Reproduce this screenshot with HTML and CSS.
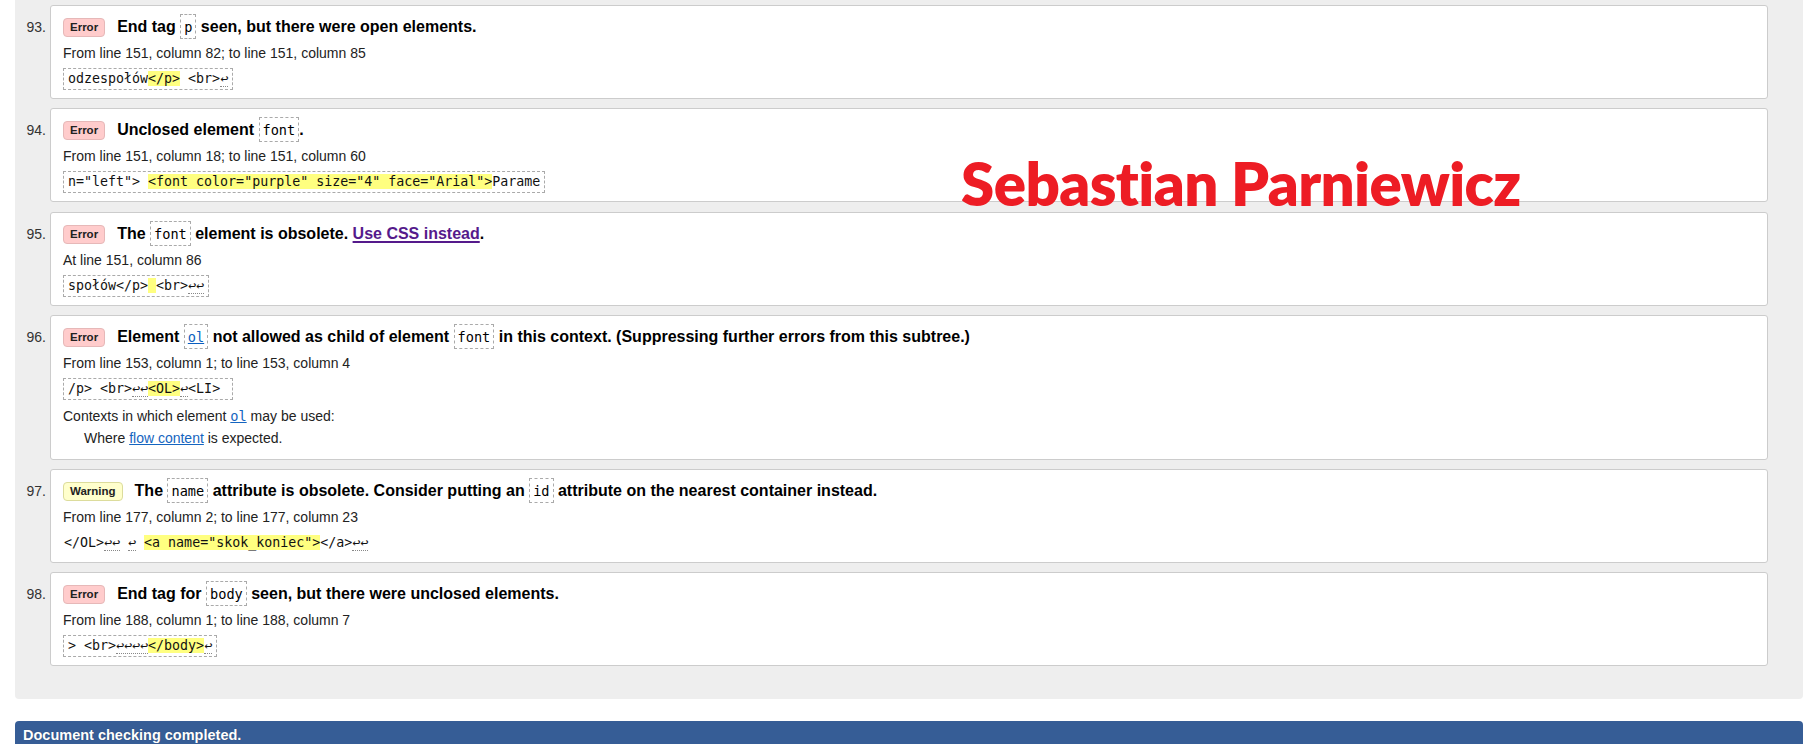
FILE: index.html
```html
<!DOCTYPE html>
<html lang="pl">
<head>
<meta charset="utf-8">
<title>Validation results</title>
<link rel="stylesheet" href="styles.css">
</head>
<body>
<div class="results">
  <ol class="msgs">
    <li class="msg">
      <span class="num">93.</span>
      <div class="card">
        <p class="title"><span class="badge error">Error</span>End tag <code>p</code> seen, but there were open elements.</p>
        <p class="loc">From line 151, column 82; to line 151, column 85</p>
        <p class="ext"><code class="extract">odzespołów<mark>&lt;/p&gt;</mark> &lt;br&gt;<span class="nl">↩</span></code></p>
      </div>
    </li>
    <li class="msg">
      <span class="num">94.</span>
      <div class="card">
        <p class="title"><span class="badge error">Error</span>Unclosed element <code>font</code>.</p>
        <p class="loc">From line 151, column 18; to line 151, column 60</p>
        <p class="ext"><code class="extract">n="left"&gt; <mark>&lt;font color="purple" size="4" face="Arial"&gt;</mark>Parame</code></p>
      </div>
    </li>
    <li class="msg">
      <span class="num">95.</span>
      <div class="card">
        <p class="title"><span class="badge error">Error</span>The <code>font</code> element is obsolete. <a class="visited" href="#">Use CSS instead</a>.</p>
        <p class="loc">At line 151, column 86</p>
        <p class="ext"><code class="extract">społów&lt;/p&gt;<mark> </mark>&lt;br&gt;<span class="nl">↩↩</span></code></p>
      </div>
    </li>
    <li class="msg">
      <span class="num">96.</span>
      <div class="card">
        <p class="title"><span class="badge error">Error</span>Element <code><a class="link" href="#">ol</a></code> not allowed as child of element <code>font</code> in this context. (Suppressing further errors from this subtree.)</p>
        <p class="loc">From line 153, column 1; to line 153, column 4</p>
        <p class="ext"><code class="extract">/p&gt; &lt;br&gt;<span class="nl">↩↩</span><mark>&lt;OL&gt;</mark><span class="nl">↩</span>&lt;LI&gt; </code></p>
        <p class="ctx">Contexts in which element <a class="link mono" href="#">ol</a> may be used:</p>
        <p class="ctx-item">Where <a class="link" href="#">flow content</a> is expected.</p>
      </div>
    </li>
    <li class="msg">
      <span class="num">97.</span>
      <div class="card">
        <p class="title"><span class="badge warning">Warning</span>The <code>name</code> attribute is obsolete. Consider putting an <code>id</code> attribute on the nearest container instead.</p>
        <p class="loc">From line 177, column 2; to line 177, column 23</p>
        <p class="ext"><code class="extract plain">&lt;/OL&gt;<span class="nl">↩↩</span> <span class="nl">↩</span> <mark>&lt;a name="skok_koniec"&gt;</mark>&lt;/a&gt;<span class="nl">↩↩</span></code></p>
      </div>
    </li>
    <li class="msg">
      <span class="num">98.</span>
      <div class="card">
        <p class="title"><span class="badge error">Error</span>End tag for <code>body</code> seen, but there were unclosed elements.</p>
        <p class="loc">From line 188, column 1; to line 188, column 7</p>
        <p class="ext"><code class="extract">&gt; &lt;br&gt;<span class="nl">↩↩↩↩</span><mark>&lt;/body&gt;</mark><span class="nl">↩</span></code></p>
      </div>
    </li>
  </ol>
</div>
<div class="status">Document checking completed.</div>
<div class="signature">Sebastian Parniewicz</div>
</body>
</html>
```
FILE: styles.css
```css
html, body {
  margin: 0;
  padding: 0;
  background: #ffffff;
}
body {
  font-family: "Liberation Sans", Arial, sans-serif;
  color: #000;
  position: relative;
  width: 1806px;
  height: 744px;
  overflow: hidden;
}
p { margin: 0; }

.results {
  margin: 0 3px 0 15px;
  background: #eeeeee;
  border-radius: 0 0 4px 4px;
  padding: 5px 35px 33px 0;
}
.msgs {
  list-style: none;
  margin: 0;
  padding: 0;
  display: flex;
  flex-direction: column;
  gap: 9.4px;
}
.msg {
  display: flex;
  align-items: flex-start;
}
.num {
  flex: 0 0 35px;
  box-sizing: border-box;
  padding: 9px 4px 0 0;
  text-align: right;
  font-size: 14px;
  line-height: 26px;
  color: #333;
}
.card {
  flex: 1;
  background: #fff;
  border: 1px solid #cccccc;
  border-radius: 3px;
  padding: 8px 12px 8px 12px;
}
.title {
  font-size: 16px;
  font-weight: bold;
  line-height: 26px;
  white-space: nowrap;
}
.title code {
  font-family: "DejaVu Sans Mono", "Liberation Mono", monospace;
  font-weight: normal;
  font-size: 13.6px;
  border: 1px dashed #aaaaaa;
  padding: 4px 3px 3px;
}
.badge {
  display: inline-block;
  vertical-align: 1px;
  height: 17px;
  line-height: 17px;
  padding: 0 6px;
  margin-right: 12px;
  border-radius: 4px;
  font-size: 11.5px;
  font-weight: bold;
  color: #222;
}
.badge.error {
  background: #ffcccc;
  border: 1px solid #e6b8b8;
}
.badge.warning {
  background: #ffffcc;
  border: 1px solid #dcdc9c;
}
.loc {
  margin-top: 4px;
  font-size: 14px;
  line-height: 18px;
  color: #222;
}
.ext {
  margin-top: 6px;
  line-height: 22px;
  height: 22px;
}
.extract {
  display: inline-block;
  vertical-align: top;
  font-family: "DejaVu Sans Mono", "Liberation Mono", monospace;
  font-size: 13.3px;
  line-height: 20px;
  border: 1px dashed #aaaaaa;
  padding: 0 4px;
  white-space: pre;
  color: #111;
}
.extract.plain {
  border-color: transparent;
  padding: 0;
}
mark {
  background: #ffff80;
  color: inherit;
}
.nl {
  border-bottom: 1px dotted #888;
}
.visited {
  color: #551a8b;
  text-decoration: underline;
  text-decoration-thickness: 2px;
  text-underline-offset: 2px;
}
.link {
  color: #1565c0;
  text-decoration: underline;
}
.title code .link {
  color: #0b5fc0;
}
.mono {
  font-family: "DejaVu Sans Mono", "Liberation Mono", monospace;
  font-size: 13.6px;
}
.ctx {
  margin-top: 6.5px;
  font-size: 14px;
  line-height: 18px;
  color: #222;
}
.ctx-item {
  margin-top: 4.5px;
  margin-bottom: 3.5px;
  padding-left: 21px;
  font-size: 14px;
  line-height: 18px;
  color: #222;
}
.status {
  margin: 22px 3px 0 15px;
  background: #365d96;
  color: #fff;
  font-weight: bold;
  font-size: 14.5px;
  line-height: 28px;
  padding: 0 8px;
  border-radius: 4px 4px 0 0;
  text-shadow: 0 0 1px rgba(0, 0, 0, 0.35);
}
.signature {
  position: absolute;
  left: 961px;
  top: 153px;
  font-family: Lato, "Open Sans", sans-serif;
  font-weight: 800;
  font-size: 60px;
  line-height: 60px;
  letter-spacing: -0.6px;
  color: #ed1c24;
  white-space: nowrap;
  z-index: 2;
}
```
